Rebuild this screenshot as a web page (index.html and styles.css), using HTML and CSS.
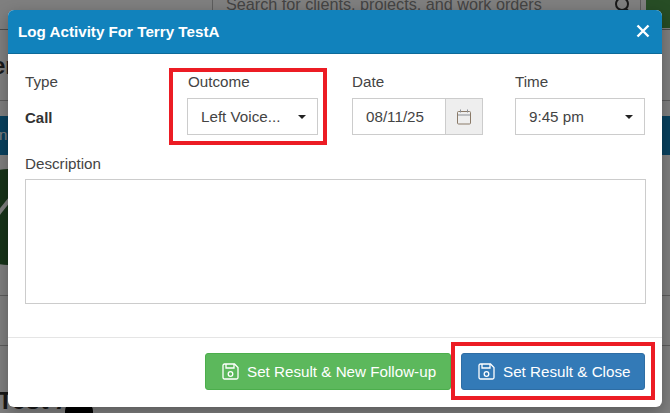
FILE: index.html
```html
<!DOCTYPE html>
<html lang="en">
<head>
<meta charset="utf-8">
<title>Log Activity</title>
<link rel="stylesheet" href="styles.css">
</head>
<body>
<div class="page">
  <div class="searchbar">
    <span class="searchbox">Search for clients, projects, and work orders</span>
    <svg class="searchicon" width="18" height="18" viewBox="0 0 18 18"><circle cx="8" cy="4" r="6" fill="none" stroke="#333" stroke-width="2"/><path d="M12 9l4 4" stroke="#333" stroke-width="2.4"/></svg>
    <span class="searchgreen"></span>
  </div>
  <span class="pagehead">er</span>
  <div class="pagerule zero"></div>
  <div class="pagestrip"><span class="striptext">n</span></div>
  <svg class="pagecircle" width="96" height="96" viewBox="0 0 96 96"><circle cx="48" cy="48" r="48" fill="#2f6632"/><path d="M34 50l16-20" stroke="#fff" stroke-width="4"/></svg>
  <div class="pagerule one"></div>
  <div class="pagerule two"></div>
  <span class="pagefoot">Test A</span>
  <span class="pagepill"></span>
  <div class="overlay"></div>
</div>

<div class="modal">
  <header class="modal-head">
    <h1 class="modal-title">Log Activity For Terry TestA</h1>
    <svg class="close" width="14" height="14" viewBox="0 0 14 14"><path d="M1.5 1.5l11 11M12.5 1.5l-11 11" stroke="#fff" stroke-width="2.4"/></svg>
  </header>
  <div class="modal-body">
    <div class="fields">
      <div class="field">
        <span class="label">Type</span>
        <strong class="static">Call</strong>
      </div>
      <div class="field">
        <span class="label label-indent">Outcome</span>
        <div class="select"><span>Left Voice...</span><i class="caret"></i></div>
      </div>
      <div class="field">
        <span class="label">Date</span>
        <div class="dategroup">
          <span class="dateinput">08/11/25</span>
          <span class="dateaddon">
            <svg width="14" height="16" viewBox="0 0 14 16"><rect x="0.5" y="2.5" width="13" height="12.5" rx="1" fill="none" stroke="#8a7a68"/><path d="M1 6h12" stroke="#8a8f96"/><path d="M3.5 0.5v3M10.5 0.5v3" stroke="#8a8f96"/></svg>
          </span>
        </div>
      </div>
      <div class="field">
        <span class="label">Time</span>
        <div class="select select-time"><span>9:45 pm</span><i class="caret"></i></div>
      </div>
    </div>
    <span class="label desc-label">Description</span>
    <div class="textarea"></div>
  </div>
  <footer class="modal-foot">
    <button class="btn green" type="button">
      <svg class="save" width="17" height="17" viewBox="0 0 17 17"><path d="M2.5 1h10l3.500 3.500v10a1.500 1.500 0 0 1-1.500 1.500h-12a1.500 1.500 0 0 1-1.500-1.500v-12a1.500 1.500 0 0 1 1.500-1.500z" fill="none" stroke="currentColor" stroke-width="1.300"/><path d="M4 1v4h8v-4" fill="none" stroke="currentColor" stroke-width="1.300"/><circle cx="8.500" cy="11" r="2.300" fill="none" stroke="currentColor" stroke-width="1.300"/></svg>
      <span>Set Result &amp; New Follow-up</span>
    </button>
    <button class="btn blue" type="button">
      <svg class="save" width="17" height="17" viewBox="0 0 17 17"><path d="M2.5 1h10l3.500 3.500v10a1.500 1.500 0 0 1-1.500 1.500h-12a1.500 1.500 0 0 1-1.500-1.500v-12a1.500 1.500 0 0 1 1.500-1.500z" fill="none" stroke="currentColor" stroke-width="1.300"/><path d="M4 1v4h8v-4" fill="none" stroke="currentColor" stroke-width="1.300"/><circle cx="8.500" cy="11" r="2.300" fill="none" stroke="currentColor" stroke-width="1.300"/></svg>
      <span>Set Result &amp; Close</span>
    </button>
  </footer>
</div>

<div class="callout callout-outcome"></div>
<div class="callout callout-close"></div>
</body>
</html>
```

FILE: styles.css
```css
* { box-sizing: border-box; }
html, body {
  margin: 0;
  height: 100%;
  overflow: hidden;
  font-family: "Liberation Sans", Arial, sans-serif;
  color: #333;
}
.page {
  position: absolute;
  inset: 0;
  background: #fff;
  overflow: hidden;
}
.searchbar {
  position: absolute;
  left: 0;
  top: 0;
  width: 670px;
  height: 30px;
  border-bottom: 1px solid #999;
}
.searchbox {
  position: absolute;
  left: 212px;
  top: -9px;
  width: 429px;
  height: 26px;
  padding: 4px 13px;
  border-left: 1px solid #bbb;
  border-right: 1px solid #bbb;
  font-size: 16.2px;
  color: #888;
  white-space: nowrap;
}
.searchicon { position: absolute; left: 614px; top: 0; }
.searchgreen {
  position: absolute;
  left: 646px;
  top: 0;
  width: 24px;
  height: 28px;
  background: #4f9a4a;
}
.pagehead {
  position: absolute;
  left: -8px;
  top: 52px;
  font-size: 24px;
  font-weight: 700;
  color: #333;
}
.pagestrip {
  position: absolute;
  left: 0;
  top: 116px;
  width: 670px;
  height: 39px;
  background: #1182bc;
}
.striptext {
  position: absolute;
  left: -1px;
  top: 10px;
  font-size: 15px;
  color: #fff;
}
.pagecircle {
  position: absolute;
  left: -40px;
  top: 169px;
}
.pagerule { position: absolute; left: 0; width: 670px; height: 1px; background: #bbb; }
.pagerule.zero { top: 100px; }
.pagerule.one { top: 295px; }
.pagerule.two { top: 345px; }
.pagefoot {
  position: absolute;
  left: -2px;
  top: 387px;
  font-size: 24px;
  font-weight: 700;
  color: #333;
  letter-spacing: 1px;
}
.pagepill {
  position: absolute;
  left: 65px;
  top: 403px;
  width: 28px;
  height: 24px;
  border-radius: 8px;
  background: #000;
}
.overlay {
  position: absolute;
  inset: 0;
  background: rgba(0, 0, 0, 0.5);
}

.modal {
  position: absolute;
  left: 8px;
  top: 10px;
  width: 654px;
  height: 397px;
  display: flex;
  flex-direction: column;
  background: #fff;
  border-radius: 6px;
  overflow: hidden;
  box-shadow: 0 5px 15px rgba(0, 0, 0, 0.3);
}
.modal-head {
  flex: none;
  height: 44px;
  display: flex;
  align-items: center;
  justify-content: space-between;
  padding: 0 12px 1px 10px;
  background: #1182bc;
  border-bottom: 1px solid #0d6a99;
  color: #fff;
}
.modal-title {
  margin: 0;
  font-size: 15.2px;
  font-weight: 700;
}
.modal-body {
  flex: 1;
  padding: 19px 16px 0 17px;
  border-bottom: 1px solid #e5e5e5;
}
.fields {
  display: grid;
  grid-template-columns: 162px 165px 163px 130px;
}
.field { display: flex; flex-direction: column; }
.label {
  display: block;
  font-size: 15.2px;
  line-height: 17px;
  color: #444;
  margin-bottom: 8px;
}
.label-indent { margin-left: 1px; }
.static {
  height: 37px;
  font-size: 15px;
  line-height: 39px;
  color: #333;
}
.select {
  width: 131px;
  height: 37px;
  display: flex;
  align-items: center;
  justify-content: space-between;
  padding: 0 11px 0 13px;
  border: 1px solid #ccc;
  font-size: 15.2px;
  color: #444;
}
.select-time { width: 130px; }
.caret {
  width: 0;
  height: 0;
  border-left: 4px solid transparent;
  border-right: 4px solid transparent;
  border-top: 4px solid #222;
}
.dategroup {
  width: 131px;
  height: 37px;
  display: flex;
  border: 1px solid #ccc;
  font-size: 15.2px;
}
.dateinput {
  flex: 1;
  padding-left: 13px;
  line-height: 35px;
  color: #444;
}
.dateaddon {
  width: 37px;
  display: flex;
  align-items: center;
  justify-content: center;
  background: #eee;
  border-left: 1px solid #ccc;
}
.desc-label { margin: 20px 0 7px; }
.textarea {
  height: 125px;
  border: 1px solid #ccc;
}
.modal-foot {
  flex: none;
  height: 69px;
  display: flex;
  justify-content: flex-end;
  gap: 10px;
  padding: 15px 17px 17px;
}
.btn {
  display: flex;
  align-items: center;
  gap: 8px;
  height: 37px;
  padding: 0 8px 0 16px;
  border: 1px solid transparent;
  border-radius: 3px;
  font: 15.2px "Liberation Sans", Arial, sans-serif;
  color: #fff;
  white-space: nowrap;
}
.btn.green { width: 246px; background: #5cb85c; border-color: #4cae4c; }
.btn.blue { width: 184px; background: #337ab7; border-color: #2e6da4; }
.save { flex: none; }

.callout {
  position: absolute;
  border: 4px solid #ec1c24;
}
.callout-outcome { left: 169px; top: 68px; width: 158px; height: 77px; }
.callout-close { left: 451px; top: 342px; width: 204px; height: 58px; }
```
